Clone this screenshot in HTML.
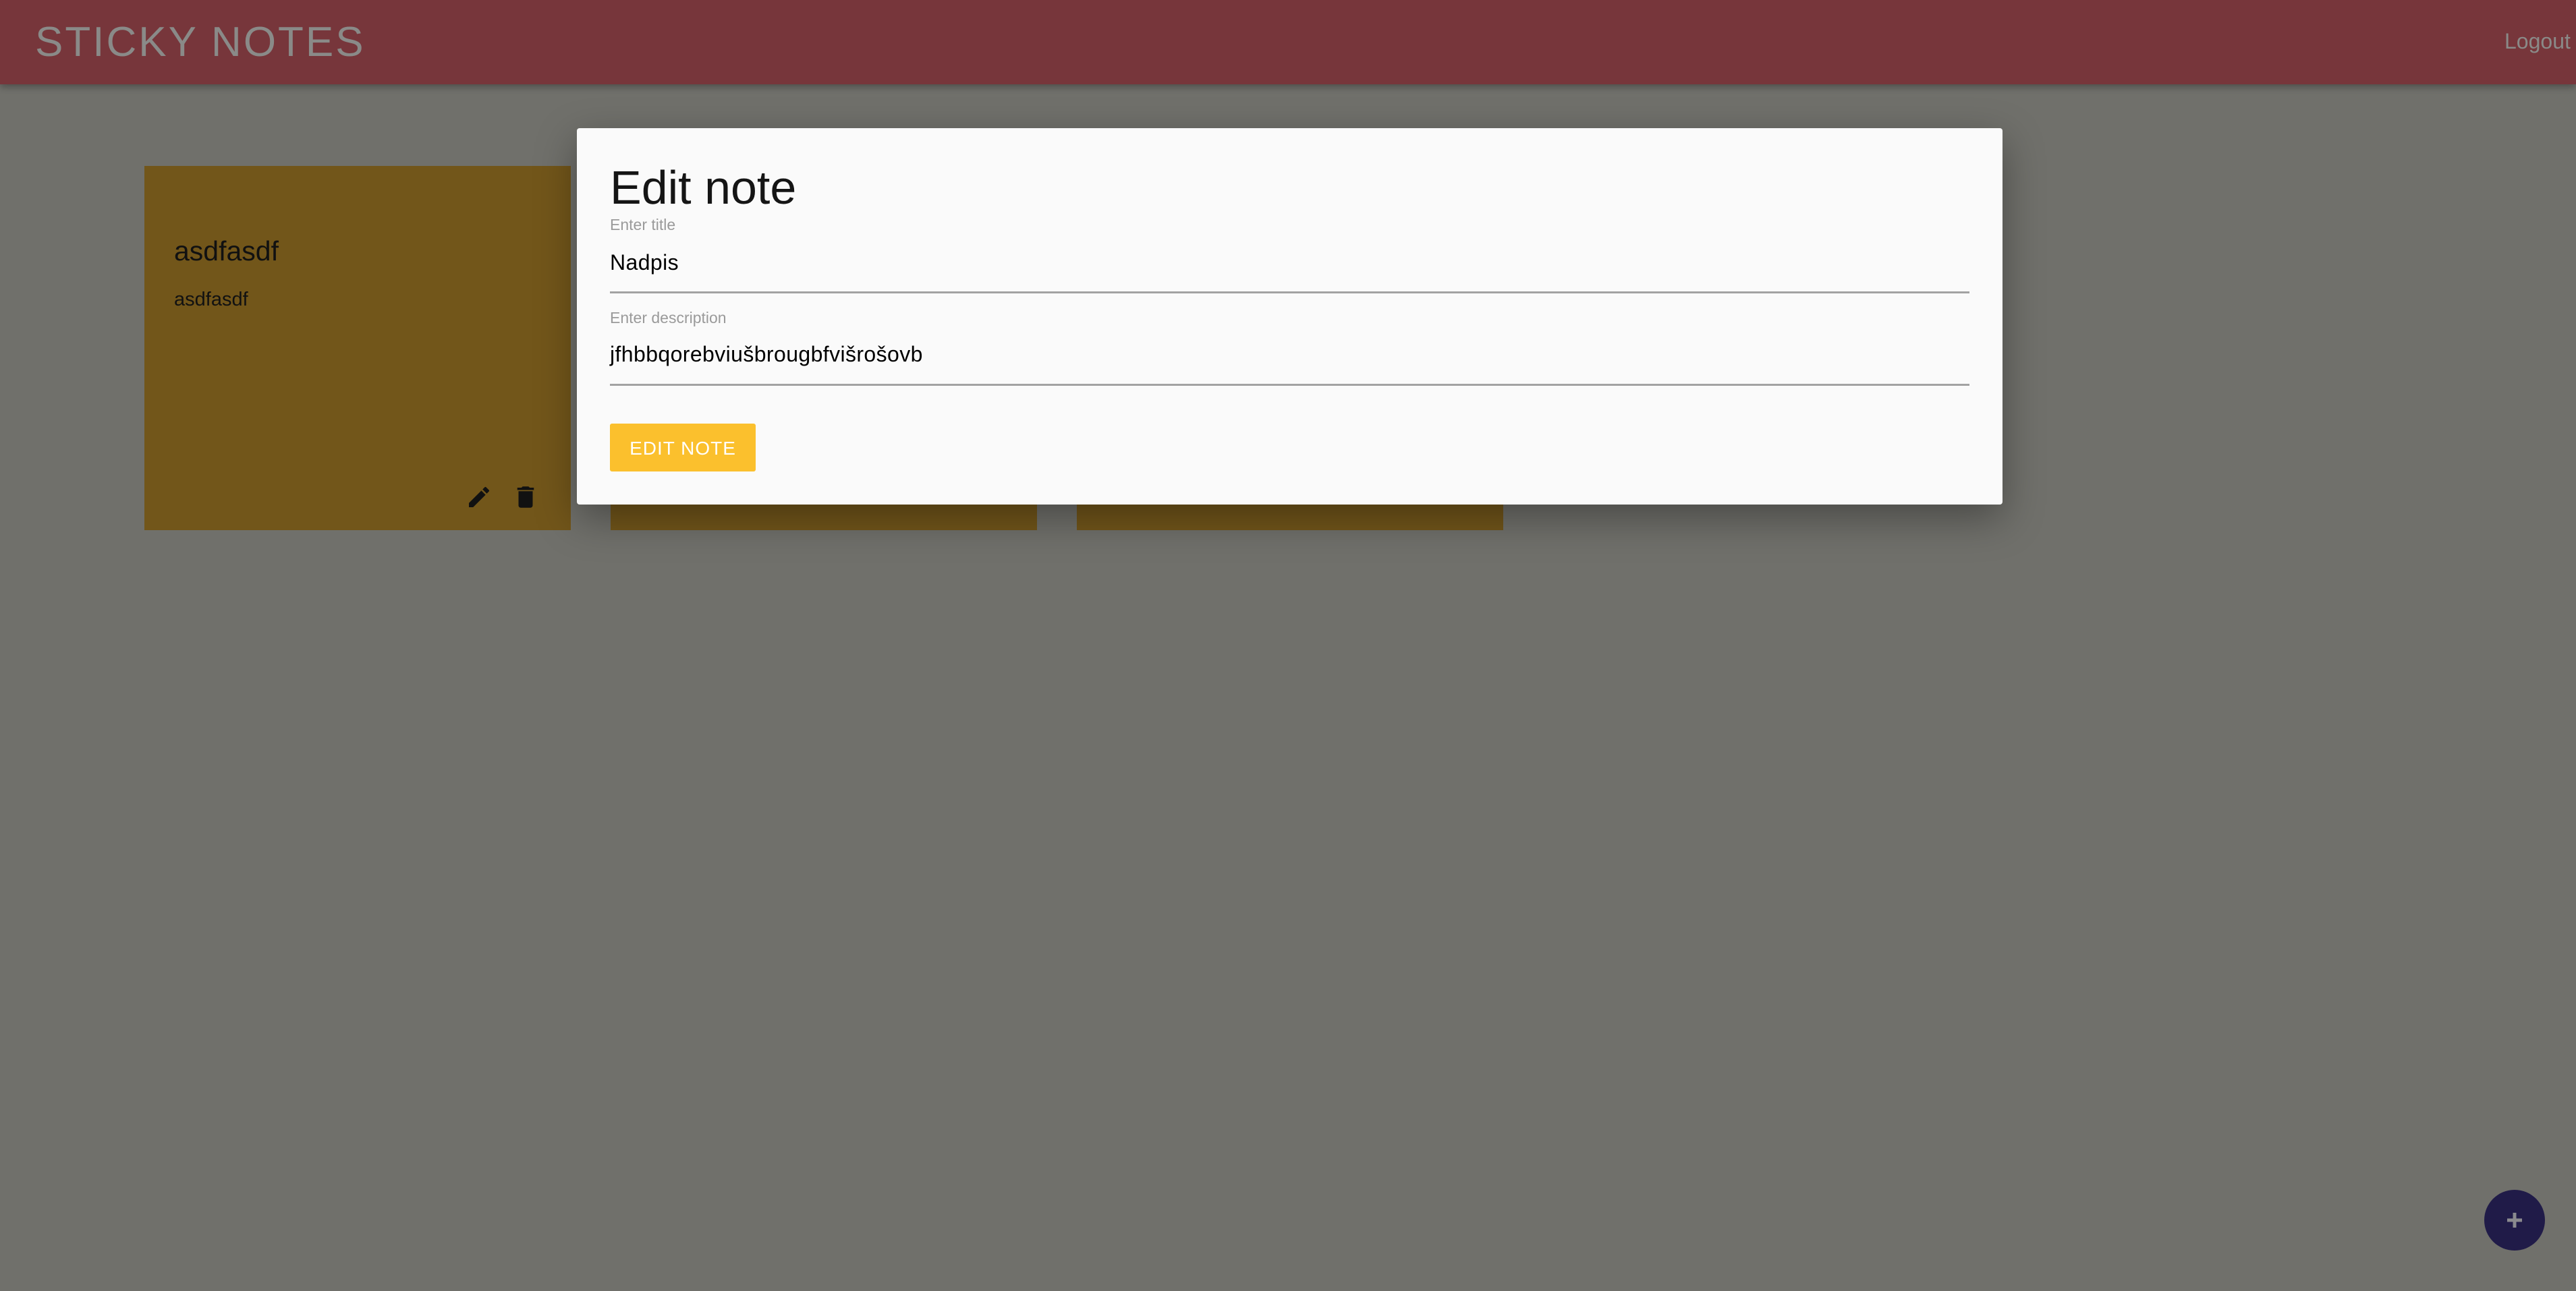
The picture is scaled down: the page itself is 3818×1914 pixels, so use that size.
<!DOCTYPE html>
<html><head><meta charset="utf-8"><style>
html,body{margin:0;padding:0;width:3818px;height:1914px;overflow:hidden;background:#70706b;font-family:"Liberation Sans",sans-serif;position:relative}
.hdr{position:absolute;left:0;top:0;width:3818px;height:125px;background:#77363b;box-shadow:0 4px 10px rgba(0,0,0,.3)}
.title{position:absolute;left:52px;top:27px;font-size:62px;letter-spacing:3px;color:#8a8a88}
.logout{position:absolute;left:3712px;top:43px;font-size:32px;color:#8a8a88}
.card{position:absolute;top:246px;width:632px;height:540px;background:#72561a}
.card h2{position:absolute;left:44px;top:103px;margin:0;font-weight:normal;font-size:41px;color:#111}
.card p{position:absolute;left:44px;top:182px;margin:0;font-size:29px;color:#111}
.modal{position:absolute;left:855px;top:190px;width:2113px;height:558px;background:#fafafa;border-radius:4px;box-shadow:0 20px 60px rgba(0,0,0,.35)}
.modal h1{position:absolute;left:49px;top:48px;margin:0;font-weight:normal;font-size:70px;color:#151515}
.lbl{position:absolute;left:49px;font-size:23px;color:#9a9a9a}
.val{position:absolute;left:49px;font-size:32px;color:#000;letter-spacing:0.4px}
.line{position:absolute;left:49px;width:2015px;height:3px;background:#a2a2a2}
.btn{position:absolute;left:49px;top:438px;width:216px;height:71px;background:#fbc02d;border-radius:3px;color:#fff;font-size:28px;text-align:center;line-height:73px;letter-spacing:1px}
.fab{position:absolute;left:3682px;top:1764px;width:90px;height:90px;border-radius:50%;background:#201b48}
</style></head><body>
<div class="hdr"><div class="title">STICKY NOTES</div><div class="logout">Logout</div></div>
<div class="card" style="left:214px"><h2>asdfasdf</h2><p>asdfasdf</p>
<svg style="position:absolute;left:476px;top:471px" width="40" height="40" viewBox="0 0 24 24"><path fill="#111" d="M3 17.25V21h3.75L17.81 9.94l-3.75-3.75L3 17.25zM20.71 7.04a1 1 0 000-1.41l-2.34-2.34a1 1 0 00-1.41 0l-1.83 1.83 3.75 3.75 1.83-1.83z"/></svg>
<svg style="position:absolute;left:544px;top:470px" width="42" height="42" viewBox="0 0 24 24"><path fill="#111" d="M6 19c0 1.1.9 2 2 2h8c1.1 0 2-.9 2-2V7H6v12zM19 4h-3.5l-1-1h-5l-1 1H5v2h14V4z"/></svg>
</div>
<div class="card" style="left:905px"></div>
<div class="card" style="left:1596px"></div>
<div class="modal">
<h1>Edit note</h1>
<div class="lbl" style="top:130px">Enter title</div>
<div class="val" style="top:181px">Nadpis</div>
<div class="line" style="top:242px"></div>
<div class="lbl" style="top:268px">Enter description</div>
<div class="val" style="top:317px">jfhbbqorebviušbrougbfvišrošovb</div>
<div class="line" style="top:379px"></div>
<div class="btn">EDIT NOTE</div>
</div>
<div class="fab"><svg style="position:absolute;left:30px;top:30px" width="30" height="30" viewBox="0 0 30 30"><path d="M15 4v22M4 15h22" stroke="#8a8a8e" stroke-width="5"/></svg></div>
</body></html>
